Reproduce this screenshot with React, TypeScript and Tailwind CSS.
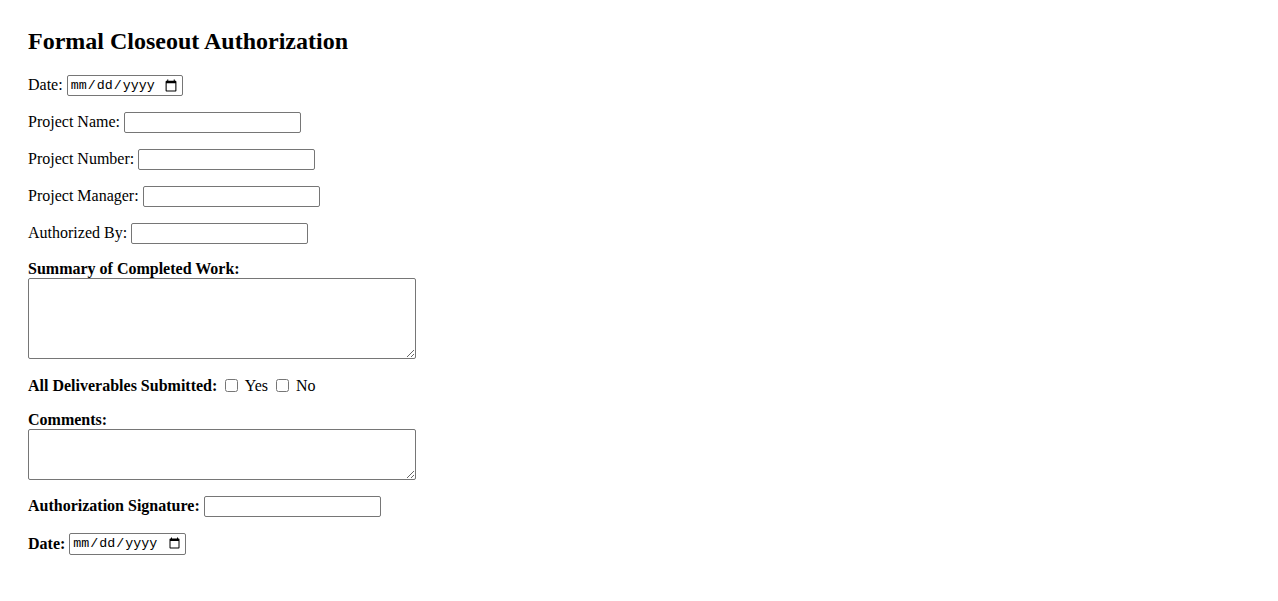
import React from "react";

const textInput =
  "inline-block align-baseline w-[177px] h-[21px] border border-[#767676] rounded-[2px] px-[2px] bg-white text-[13.33px] [font-family:'Liberation_Sans',Arial,sans-serif]";

const dateInput =
  "inline-block w-[116px] h-[21px] border border-[#767676] rounded-[2px] px-[2px] bg-white text-[13.33px] text-black [font-family:'Liberation_Mono',monospace]";

const areaCls =
  "block w-[388px] border border-[#767676] rounded-[2px] px-[2px] py-[2px] bg-white text-[13.33px] [font-family:'Liberation_Mono',monospace]";

const FIELDS = ["Project Name", "Project Number", "Project Manager", "Authorized By"];

export default function App() {
  return (
    <div className="min-h-screen bg-white text-black pt-[28px] pl-[28px] text-[16px] leading-[normal] [font-family:'Liberation_Serif','Times_New_Roman',serif]">
      <h2 className="text-[24px] font-bold mb-[20px]">Formal Closeout Authorization</h2>

      <form>
        <p className="mb-4">
          Date: <input type="date" className={`${dateInput} align-[1px]`} />
        </p>

        {FIELDS.map((f) => (
          <p key={f} className="mb-4">
            {f}: <input type="text" className={textInput} />
          </p>
        ))}

        <div className="mb-4">
          <label className="block font-bold">Summary of Completed Work:</label>
          <textarea rows={5} className={`${areaCls} h-[81px]`} />
        </div>

        <p className="mb-4 pt-px">
          <b>All Deliverables Submitted:</b>{" "}
          <label>
            <input type="checkbox" className="ml-[4px] mr-[3px] my-[3px] align-[-1px]" /> Yes
          </label>{" "}
          <label>
            <input type="checkbox" className="ml-[4px] mr-[3px] my-[3px] align-[-1px]" /> No
          </label>
        </p>

        <div className="mb-4">
          <label className="block font-bold">Comments:</label>
          <textarea rows={3} className={`${areaCls} h-[51px]`} />
        </div>

        <p className="mb-4">
          <b>Authorization Signature:</b> <input type="text" className={textInput} />
        </p>

        <p className="mb-4">
          <b>Date:</b> <input type="date" className={`${dateInput} w-[117px] h-[22px] align-[2px]`} />
        </p>
      </form>
    </div>
  );
}
